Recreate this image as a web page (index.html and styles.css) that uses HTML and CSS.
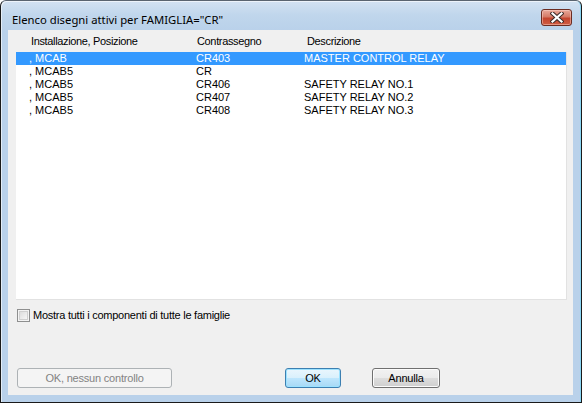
FILE: index.html
```html
<!DOCTYPE html>
<html>
<head>
<meta charset="utf-8">
<link rel="stylesheet" href="styles.css">
</head>
<body>
<div class="window">
  <div class="titlebar">
    <span class="title">Elenco disegni attivi per FAMIGLIA="CR"</span>
    <div class="close">
      <svg width="14" height="11" viewBox="0 0 14 11">
        <path d="M2.5 1.5 L11.5 9.5 M11.5 1.5 L2.5 9.5" stroke="#3b2a28" stroke-width="4.2" stroke-linecap="square" fill="none"/>
        <path d="M2.5 1.5 L11.5 9.5 M11.5 1.5 L2.5 9.5" stroke="#ffffff" stroke-width="2.2" stroke-linecap="square" fill="none"/>
      </svg>
    </div>
  </div>
  <div class="client">
    <div class="list">
      <div class="header">
        <span class="hc c1">Installazione, Posizione</span>
        <span class="hc c2">Contrassegno</span>
        <span class="hc c3">Descrizione</span>
      </div>
      <div class="body">
        <div class="row selected"><span class="dc c1">, MCAB</span><span class="dc c2">CR403</span><span class="dc c3">MASTER CONTROL RELAY</span></div>
        <div class="row"><span class="dc c1">, MCAB5</span><span class="dc c2">CR</span><span class="dc c3"></span></div>
        <div class="row"><span class="dc c1">, MCAB5</span><span class="dc c2">CR406</span><span class="dc c3">SAFETY RELAY NO.1</span></div>
        <div class="row"><span class="dc c1">, MCAB5</span><span class="dc c2">CR407</span><span class="dc c3">SAFETY RELAY NO.2</span></div>
        <div class="row"><span class="dc c1">, MCAB5</span><span class="dc c2">CR408</span><span class="dc c3">SAFETY RELAY NO.3</span></div>
      </div>
    </div>
    <div class="check">
      <span class="box"></span>
      <span class="label">Mostra tutti i componenti di tutte le famiglie</span>
    </div>
    <div class="spacer"></div>
    <div class="buttons">
      <div class="btn disabled">OK, nessun controllo</div>
      <div class="btn default">OK</div>
      <div class="btn cancel">Annulla</div>
    </div>
  </div>
</div>
</body>
</html>
```
FILE: styles.css
```css
html, body {
  margin: 0;
  padding: 0;
  background: #ffffff;
}
.window {
  box-sizing: border-box;
  width: 582px;
  height: 403px;
  border: 1px solid #1a1a1a;
  border-top-color: #5a6470;
  border-radius: 6px 6px 0 0;
  background: linear-gradient(#d3e2f2 0px, #c0d6ec 14px, #b9d1ea 30px, #b9d1ea 100%);
  box-shadow: inset 1px 1px 0 rgba(255,255,255,0.6), inset -1px 0 0 #8ad6f4;
  display: flex;
  flex-direction: column;
  padding: 0 8px 7px 7px;
  font-family: "Liberation Sans", Arial, sans-serif;
  font-size: 11px;
  color: #000;
}
.titlebar {
  height: 29px;
  display: flex;
  align-items: flex-start;
  justify-content: space-between;
}
.title {
  font-family: "Noto Sans", "Open Sans", sans-serif;
  font-size: 11.3px;
  margin-top: 10px;
  margin-left: 4px;
  line-height: 17px;
  color: #000;
}
.close {
  box-sizing: border-box;
  width: 31px;
  height: 17px;
  margin-top: 8px;
  margin-right: 1px;
  border: 1px solid #6b2c22;
  border-radius: 3px;
  background: linear-gradient(#e9a99b 0%, #d57a67 45%, #c4452f 55%, #cf5c43 100%);
  box-shadow: inset 0 0 0 1px rgba(255,220,210,0.45);
  display: flex;
  align-items: center;
  justify-content: center;
}
.close svg { display: block; }
.client {
  flex: 1;
  background: #f0f0f0;
  display: flex;
  flex-direction: column;
  padding-bottom: 7px;
}
.list {
  margin: 0 6px 0 8px;
  display: flex;
  flex-direction: column;
}
.header {
  height: 22px;
  position: relative;
  line-height: 22px;
  letter-spacing: -0.35px;
}
.body {
  height: 248px;
  background: #ffffff;
  border-right: 1px solid #e2e2e2;
  border-bottom: 1px solid #e2e2e2;
  box-sizing: border-box;
}
.row {
  height: 13px;
  line-height: 13px;
  position: relative;
  white-space: nowrap;
}
.row.selected {
  background: #3399ff;
  color: #ffffff;
}
.hc, .dc {
  position: absolute;
  top: 0;
  white-space: nowrap;
}
.hc.c1 { left: 15px; }
.hc.c2 { left: 181px; }
.hc.c3 { left: 291px; }
.dc.c1 { left: 13px; }
.dc.c2 { left: 180px; }
.dc.c3 { left: 288px; }
.check {
  display: flex;
  align-items: center;
  margin: 9px 0 0 9px;
  height: 13px;
}
.box {
  box-sizing: border-box;
  width: 13px;
  height: 13px;
  border: 1px solid #8e8f8f;
  background: linear-gradient(135deg, #d6d6d6 0%, #f2f2f2 70%, #ffffff 100%);
  box-shadow: inset 0 0 0 1px #f4f4f4, inset 0 0 0 2px #d0d0d0;
}
.label {
  margin-left: 3px;
  line-height: 13px;
  letter-spacing: -0.25px;
}
.spacer { flex: 1; }
.buttons {
  display: flex;
  align-items: center;
  padding-left: 9px;
}
.btn {
  box-sizing: border-box;
  height: 20px;
  border-radius: 3px;
  display: flex;
  align-items: center;
  justify-content: center;
  line-height: 13px;
  letter-spacing: -0.2px;
}
.btn.disabled {
  width: 155px;
  border: 1px solid #adb2b5;
  background: #f4f4f4;
  color: #838383;
}
.btn.default {
  width: 56px;
  margin-left: 113px;
  border: 1px solid #3c7fb1;
  background: linear-gradient(#eaf6fd 0%, #d9f0fc 50%, #bee6fd 51%, #a7d9f5 100%);
  box-shadow: inset 0 0 0 1px #9ce2ff;
}
.btn.cancel {
  width: 68px;
  margin-left: 31px;
  border: 1px solid #707070;
  background: linear-gradient(#f2f2f2 0%, #ebebeb 50%, #dddddd 51%, #cfcfcf 100%);
  box-shadow: inset 0 0 0 1px #fcfcfc;
}
```
